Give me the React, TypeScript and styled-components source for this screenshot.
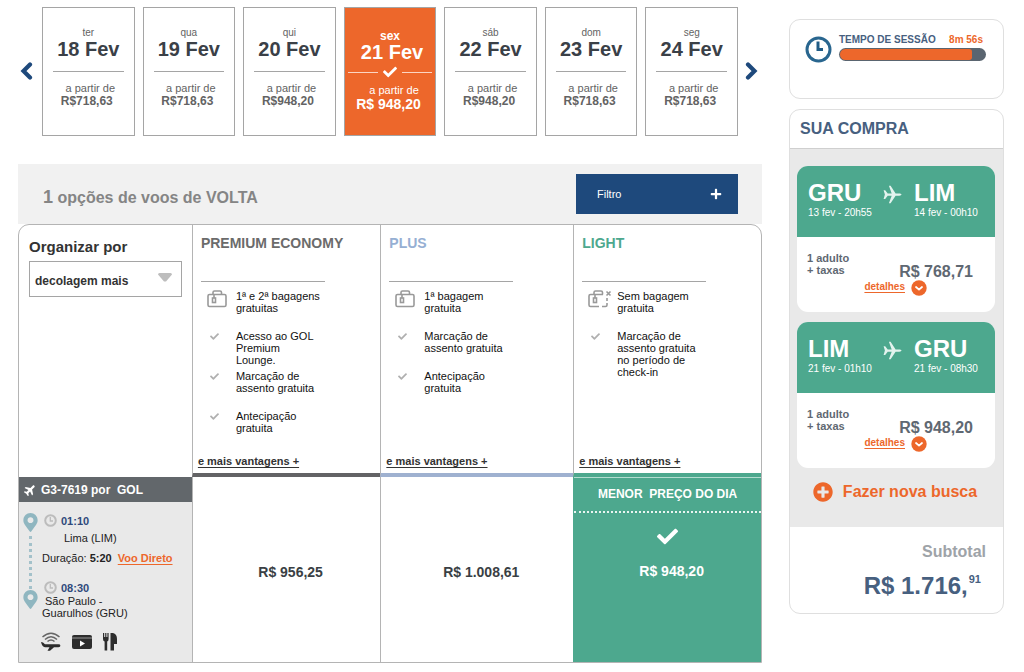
import React from "react";
import styled, { createGlobalStyle, css } from "styled-components";
import { FaCheck, FaMapMarkerAlt, FaPlus, FaPlusCircle } from "react-icons/fa";

const color = {
  orange: "#ed672b",
  green: "#4da88e",
  navy: "#1e497c",
  slate: "#47607f",
  line: "#b4b4b4",
  panel: "#e9e9e9",
};

const GlobalStyle = createGlobalStyle`
  *, *::before, *::after { box-sizing: border-box; }
  body {
    margin: 0;
    background: #fff;
    color: #222;
    font-family: "Liberation Sans", Arial, sans-serif;
    font-size: 11px;
    line-height: 12px;
  }
  button, select { font-family: inherit; }
  h1, h2, h3, p, ul, ol, dl { margin: 0; padding: 0; }
  ul, ol { list-style: none; }
  svg { display: block; flex: none; }
`;

const Page = styled.div`
  display: grid;
  grid-template-columns: minmax(0, 1fr) 215px;
  align-items: start;
  gap: 27px;
  padding: 7px 20px 8px 18px;
`;

/* ---------- date strip ---------- */

const DateStrip = styled.nav`
  display: flex;
  align-items: center;
`;

const ArrowButton = styled.button<{ $end?: boolean }>`
  display: flex;
  justify-content: ${(p) => (p.$end ? "flex-end" : "flex-start")};
  width: 24px;
  padding: 0 4px 2px 2px;
  border: 0;
  background: none;
  color: ${color.navy};
  cursor: pointer;
`;

const DateList = styled.ol`
  flex: 1;
  display: grid;
  grid-template-columns: repeat(7, minmax(0, 1fr));
  gap: 8px;
`;

const DateCard = styled.button<{ $active?: boolean }>`
  display: flex;
  flex-direction: column;
  align-items: stretch;
  width: 100%;
  height: 129px;
  padding: ${(p) => (p.$active ? "22px 3px 0" : "19px 10px 0")};
  border: 1px solid #a5a5a5;
  background: ${(p) => (p.$active ? color.orange : "#fff")};
  color: ${(p) => (p.$active ? "#fff" : "#636363")};
  text-align: center;
  white-space: nowrap;
  cursor: pointer;
`;

const Weekday = styled.span<{ $active?: boolean }>`
  font-size: ${(p) => (p.$active ? 12 : 10)}px;
  font-weight: ${(p) => (p.$active ? 700 : 400)};
  line-height: 12px;
`;

const DayLabel = styled.strong<{ $active?: boolean }>`
  padding-left: ${(p) => (p.$active ? 4 : 0)}px;
  color: ${(p) => (p.$active ? "#fff" : "#3a4047")};
  font-size: 20px;
  line-height: 20px;
`;

const CardRule = styled.span`
  height: 1px;
  margin: 12px 0 10px;
  background: #a5a5a5;
`;

const CheckRule = styled.span`
  display: flex;
  align-items: center;
  gap: 5px;
  height: 14px;
  margin: 3px 0 5px;
  &::before,
  &::after {
    content: "";
    flex: 1;
    height: 1px;
    background: #fbd5c4;
  }
`;

const FromLabel = styled.span<{ $active?: boolean }>`
  padding-left: ${(p) => (p.$active ? 8 : 4)}px;
  font-size: 11px;
  line-height: 12px;
`;

const FromPrice = styled.strong<{ $active?: boolean }>`
  padding-right: 3px;
  font-size: ${(p) => (p.$active ? 14 : 12)}px;
  line-height: ${(p) => (p.$active ? 16 : 14)}px;
`;

/* ---------- results ---------- */

const ResultsHeader = styled.header`
  display: flex;
  align-items: center;
  justify-content: space-between;
  height: 60px;
  margin-top: 28px;
  padding: 0 24px 0 25px;
  background: #f1f1f1;
`;

const ResultsTitle = styled.h1`
  padding-top: 6px;
  color: #858585;
  font-size: 16px;
  line-height: 20px;
`;

const ResultCount = styled.span`
  font-size: 18px;
`;

const FilterButton = styled.button`
  display: flex;
  align-items: center;
  justify-content: space-between;
  width: 162px;
  height: 40px;
  padding: 0 16px 0 21px;
  border: 0;
  background: ${color.navy};
  color: #fff;
  font-size: 11px;
  cursor: pointer;
`;

const TableFrame = styled.div`
  overflow: hidden;
  border: 1px solid ${color.line};
  border-radius: 11px 11px 0 0;
`;

const FareTable = styled.table`
  width: 100%;
  table-layout: fixed;
  border-collapse: separate;
  border-spacing: 0;
`;

const Col = styled.col<{ $share: number }>`
  width: ${(p) => p.$share}%;
`;

const SortCell = styled.td`
  padding: 14px 10px 0;
  vertical-align: top;
`;

const SortLabel = styled.label`
  display: block;
  margin-bottom: 6px;
  color: #333;
  font-size: 15px;
  font-weight: 700;
  line-height: 16px;
`;

const SelectWrap = styled.div`
  display: grid;
  align-items: center;
  > * {
    grid-area: 1 / 1;
  }
  svg {
    justify-self: end;
    margin: 0 10px 3px 0;
    pointer-events: none;
  }
`;

const SortSelect = styled.select`
  width: 100%;
  height: 36px;
  padding: 4px 28px 0 5px;
  border: 1px solid #a5a5a5;
  border-radius: 0;
  background: #fff;
  color: #333;
  font-size: 12px;
  font-weight: 700;
  appearance: none;
`;

const PlanCell = styled.th<{ $bar: string }>`
  padding: 10px 5px 5px;
  border-left: 1px solid ${color.line};
  border-bottom: 4px solid ${(p) => p.$bar};
  color: #111;
  font-weight: 400;
  text-align: left;
  vertical-align: top;
`;

const PlanName = styled.h2<{ $color: string }>`
  padding-left: 3px;
  color: ${(p) => p.$color};
  font-size: 14px;
  line-height: 16px;
`;

const PlanRule = styled.hr`
  width: 124px;
  height: 1px;
  margin: 30px 0 8px 3px;
  border: 0;
  background: #a5a5a5;
`;

const FeatureList = styled.ul`
  min-height: 164px;
`;

const Feature = styled.li`
  display: grid;
  grid-template-columns: 29px 86px;
  min-height: 40px;
  padding-left: 9px;
`;

const FeatureIcon = styled.span<{ $check?: boolean }>`
  padding: ${(p) => (p.$check ? "2px 0 0 3px" : "0")};
  color: #b0b0b0;
`;

const MoreLink = styled.a`
  color: #333;
  font-size: 11px;
  font-weight: 700;
  line-height: 14px;
  text-underline-offset: 2px;
`;

const FlightCell = styled.td`
  padding: 0;
  background: ${color.panel};
  vertical-align: top;
`;

const FlightBar = styled.h3`
  display: flex;
  align-items: center;
  gap: 5px;
  height: 25px;
  padding-left: 5px;
  background: #62676b;
  color: #fff;
  font-size: 12px;
  white-space: pre;
`;

const Itinerary = styled.div`
  display: grid;
  grid-template-columns: 13px 1fr;
  gap: 5px;
  padding: 11px 0 0 5px;
`;

const Route = styled.div`
  display: flex;
  flex-direction: column;
  align-items: center;
  height: 96px;
  color: #8fb6c0;
`;

const RouteDots = styled.span`
  flex: 1;
  margin: 4px 0 1px;
  border-left: 3px dotted #a3c1ca;
`;

const LegTime = styled.p`
  display: flex;
  align-items: center;
  gap: 4px;
  height: 14px;
  padding: 1px 0 0 2px;
  color: #2f4a7c;
  font-weight: 700;
`;

const LegPlace = styled.p<{ $indent: number; $block?: boolean }>`
  padding-top: ${(p) => (p.$block ? 1 : 5)}px;
  padding-left: ${(p) => p.$indent}px;
  text-indent: ${(p) => (p.$block ? 3 : 0)}px;
`;

const Duration = styled.p`
  padding: 8px 0 16px;
  white-space: nowrap;
`;

const DirectLink = styled.a`
  margin-left: 6px;
  color: ${color.orange};
  font-weight: 700;
  text-underline-offset: 2px;
`;

const Amenities = styled.ul`
  display: flex;
  align-items: center;
  gap: 11px;
  padding: 13px 0 9px 22px;
  color: #2d2d2d;
`;

const PriceCell = styled.td<{ $best?: boolean }>`
  height: 185px;
  padding: 0;
  border-left: 1px solid ${(p) => (p.$best ? color.green : color.line)};
  background: ${(p) => (p.$best ? color.green : "#fff")};
  box-shadow: ${(p) => (p.$best ? "inset 0 1px 0 #b5ddd0" : "none")};
`;

const PriceButton = styled.button<{ $best?: boolean }>`
  display: flex;
  flex-direction: column;
  align-items: center;
  justify-content: center;
  width: 100%;
  height: 185px;
  padding: 4px 0 0 8px;
  border: 0;
  background: none;
  color: #3a3f44;
  font-size: 14px;
  font-weight: 700;
  line-height: 16px;
  cursor: pointer;
  ${(p) =>
    p.$best &&
    css`
      justify-content: flex-start;
      padding: 0;
      color: #fff;
      svg {
        margin: 13px 0 16px;
      }
    `}
`;

const BestBanner = styled.span`
  width: 100%;
  height: 36px;
  padding-top: 9px;
  border-bottom: 2px dotted #e8f5f1;
  font-size: 12px;
  white-space: pre;
`;

const BestPrice = styled.span`
  padding-left: 8px;
`;

/* ---------- sidebar ---------- */

const Sidebar = styled.aside`
  display: flex;
  flex-direction: column;
  gap: 10px;
  padding-top: 12px;
`;

const Panel = styled.section`
  overflow: hidden;
  border: 1px solid #dfdfdf;
  border-radius: 11px;
  background: #fff;
`;

const SessionPanel = styled(Panel)`
  display: flex;
  gap: 7px;
  height: 80px;
  padding: 15px 17px 0 15px;
  > svg {
    margin-top: 1px;
  }
`;

const SessionInfo = styled.div`
  flex: 1;
`;

const SessionText = styled.div`
  display: flex;
  justify-content: space-between;
  margin-bottom: 3px;
  padding-right: 3px;
  color: ${color.slate};
  font-size: 10px;
  font-weight: 700;
  line-height: 10px;
  white-space: nowrap;
`;

const TimeLeft = styled.span`
  color: ${color.orange};
`;

const Track = styled.div`
  height: 13px;
  padding: 1px;
  border-radius: 7px;
  background: #5a6570;
`;

const TrackFill = styled.div`
  height: 11px;
  border-radius: 6px 3px 3px 6px;
  background: ${color.orange};
`;

const PurchaseTitle = styled.h2`
  height: 39px;
  padding: 9px 10px 0;
  border-bottom: 1px solid #cfcfcf;
  color: ${color.slate};
  font-size: 16px;
  line-height: 20px;
`;

const TripArea = styled.div`
  display: flex;
  flex-direction: column;
  gap: 10px;
  padding: 17px 8px 25px 7px;
  background: ${color.panel};
`;

const TripCard = styled.article`
  overflow: hidden;
  border-radius: 11px;
  background: #fff;
`;

const TripRoute = styled.div`
  display: grid;
  grid-template-columns: 75px 31px 1fr;
  height: 71px;
  padding: 14px 0 0 11px;
  background: ${color.green};
  color: #fff;
  svg {
    margin-top: 5px;
  }
`;

const Airport = styled.strong`
  display: block;
  font-size: 24px;
  line-height: 26px;
`;

const TripDate = styled.span`
  font-size: 10px;
  line-height: 12px;
  white-space: nowrap;
`;

const TripFare = styled.div`
  display: grid;
  grid-template-columns: 1fr auto;
  align-content: start;
  height: 75px;
  padding: 15px 22px 0 10px;
  color: #5f6872;
  font-weight: 700;
`;

const TripPrice = styled.strong`
  padding-top: 11px;
  font-size: 16px;
  line-height: 17px;
`;

const DetailsLink = styled.a`
  grid-column: 1 / -1;
  display: flex;
  gap: 6px;
  justify-self: end;
  height: 16px;
  margin-right: 46px;
  color: ${color.orange};
  font-size: 10px;
  line-height: 14px;
  text-underline-offset: 2px;
`;

const NewSearch = styled.button`
  display: flex;
  align-items: center;
  align-self: center;
  gap: 10px;
  margin: 4px 2px 0 0;
  padding: 0;
  border: 0;
  background: none;
  color: ${color.orange};
  font-size: 16px;
  font-weight: 700;
  line-height: 20px;
  white-space: nowrap;
  cursor: pointer;
`;

const Totals = styled.div`
  padding: 15px 17px 13px;
  text-align: right;
`;

const SubtotalLabel = styled.p`
  color: #9ea3a8;
  font-size: 16px;
  font-weight: 700;
  line-height: 20px;
`;

const TotalValue = styled.p`
  display: flex;
  justify-content: flex-end;
  padding: 10px 5px 0 0;
  color: ${color.slate};
  font-size: 24px;
  font-weight: 700;
  line-height: 28px;
`;

const Cents = styled.span`
  padding-left: 1px;
  font-size: 11px;
  line-height: 14px;
`;

/* ---------- drawings ---------- */

const Chevron = ({ right }: { right?: boolean }) => (
  <svg width="13" height="18" viewBox="0 0 13 18" fill="none" stroke="currentColor" strokeWidth="4.200">
    <path
      strokeLinejoin="miter"
      strokeLinecap="round"
      d={right ? "M3 2.500L9.500 9L3 15.500" : "M10 2.500L3.500 9L10 15.500"}
    />
  </svg>
);

const GrayClock = () => (
  <svg width="13" height="13" viewBox="0 0 13 13" fill="none" stroke="#bcbcbc">
    <circle cx="6.500" cy="6.500" r="5.300" strokeWidth="2" />
    <path d="M6.300 3V7H9" strokeWidth="1.300" />
  </svg>
);

const DownBadge = () => (
  <svg width="16" height="16" viewBox="0 0 16 16" fill="none">
    <circle cx="8" cy="8" r="7.700" fill={color.orange} />
    <path d="M5 7l3 2.600L11 7" stroke="#fff" strokeWidth="1.800" strokeLinecap="round" strokeLinejoin="round" />
  </svg>
);

const BagIcon = ({ none }: { none?: boolean }) => (
  <svg width="24" height="18" viewBox="0 0 24 18" fill="none" stroke="#999" strokeWidth="1.600">
    {none ? (
      <>
        <path d="M15 4.500H2.500Q1 4.500 1 6V15Q1 16.500 2.500 16.500H11M14 16.500H17.500Q19 16.500 19 15V13M19 11V8" />
        <path d="M18.500 1.500l4 4M22.500 1.500l-4 4" />
      </>
    ) : (
      <rect x="1" y="4.500" width="18" height="12" rx="1.500" />
    )}
    <path d="M6 4.500V2.500Q6 1 7.500 1H13Q14.500 1 14.500 2.500V4.500" />
    <path d="M7 4.500V8" />
    <rect x="5.500" y="8" width="3" height="4.500" />
  </svg>
);

const PlaneDiagonal = () => (
  <svg width="12" height="12" viewBox="0 0 24 24" fill="#fff">
    <path
      transform="rotate(45 12 12) translate(-2 -2) scale(1.17)"
      d="M21 16v-2.500l-7-4.500V3.500c0-1.200-.8-2-2-2s-2 .8-2 2V9l-7 4.500V16l7-2.200V18l-3 2v2l5-1 5 1v-2l-3-2v-4.200z"
    />
  </svg>
);

const PlaneRight = () => (
  <svg width="19" height="19" viewBox="0 0 19 19" fill="#e3f3ee">
    <path d="M.6 5.200h1.600l2.500 3.200h4L5.900.7h1.700l5 7.700h3.700c1.300 0 2.200.6 2.200 1.200s-.9 1.200-2.200 1.200h-3.700l-5 7.500H5.900l2.800-7.500h-4L2.200 14H.6l1.300-4.400z" />
  </svg>
);

const SessionClock = () => (
  <svg width="27" height="27" viewBox="0 0 27 27" fill="none">
    <circle cx="13.500" cy="13.500" r="11.500" stroke="#29668f" strokeWidth="3" />
    <path d="M13 5.500V13.500H18" stroke="#215c86" strokeWidth="3" />
  </svg>
);

const WifiPlane = () => (
  <svg width="20" height="19" viewBox="0 0 20 19" fill="none" stroke="currentColor" strokeWidth="1.500">
    <path d="M1.500 5Q10-2.500 18.500 5M4 7.500Q10 2 16 7.500M6.500 9.500Q10 6.500 13.500 9.500" stroke="#666" />
    <path
      d="M0 10l2 .5 2 1.800H17.500q1.900 0 1.900 1.400T17.500 15.200H13L9 18.700H6.500L8.500 15.200H4Q1 14.800 0 10z"
      fill="currentColor"
      stroke="none"
    />
  </svg>
);

const VideoPlayer = () => (
  <svg width="20" height="16" viewBox="0 0 20 16">
    <rect x="0" y="1" width="20" height="14" rx="2" fill="currentColor" />
    <path d="M0 4h20" stroke="#999" strokeWidth="1" />
    <path d="M8 6.500l5 3-5 3z" fill="#fff" />
  </svg>
);

const Meal = () => (
  <svg width="14" height="18" viewBox="0 0 14 18" fill="currentColor">
    <path d="M0 0h1.200v4h1V0h1.200v4h1V0h1.200v6q0 2-1.400 2.500V17.500H1.600V8.500Q0 8 0 6z" />
    <path d="M7.500 0H10q4 1 4 6v5h-3v6.500H7.500z" />
  </svg>
);

/* ---------- data ---------- */

const dates = [
  { weekday: "ter", day: "18 Fev", price: "R$718,63" },
  { weekday: "qua", day: "19 Fev", price: "R$718,63" },
  { weekday: "qui", day: "20 Fev", price: "R$948,20" },
  { weekday: "sex", day: "21 Fev", price: "R$ 948,20", active: true },
  { weekday: "sáb", day: "22 Fev", price: "R$948,20" },
  { weekday: "dom", day: "23 Fev", price: "R$718,63" },
  { weekday: "seg", day: "24 Fev", price: "R$718,63" },
];

const plans = [
  {
    name: "PREMIUM ECONOMY",
    ink: "#6b6b6b",
    bar: "#636365",
    bag: "1ª e 2ª bagagens gratuitas",
    noBag: false,
    perks: ["Acesso ao GOL Premium Lounge.", "Marcação de assento gratuita", "Antecipação gratuita"],
  },
  {
    name: "PLUS",
    ink: "#96afd3",
    bar: "#9fb1d0",
    bag: "1ª bagagem gratuita",
    noBag: false,
    perks: ["Marcação de assento gratuita", "Antecipação gratuita"],
  },
  {
    name: "LIGHT",
    ink: color.green,
    bar: color.green,
    bag: "Sem bagagem gratuita",
    noBag: true,
    perks: ["Marcação de assento gratuita no período de check-in"],
  },
];

const trips = [
  { from: "GRU", fromDate: "13 fev - 20h55", to: "LIM", toDate: "14 fev - 00h10", price: "R$ 768,71" },
  { from: "LIM", fromDate: "21 fev - 01h10", to: "GRU", toDate: "21 fev - 08h30", price: "R$ 948,20" },
];

const sessionShare = 91;

export default function App() {
  return (
    <>
      <GlobalStyle />
      <Page>
        <main>
          <DateStrip aria-label="Datas">
            <ArrowButton type="button" aria-label="Datas anteriores">
              <Chevron />
            </ArrowButton>
            <DateList>
              {dates.map((d) => (
                <li key={d.day}>
                  <DateCard type="button" $active={d.active} aria-pressed={!!d.active}>
                    <Weekday $active={d.active}>{d.weekday}</Weekday>
                    <DayLabel $active={d.active}>{d.day}</DayLabel>
                    {d.active ? (
                      <CheckRule>
                        <FaCheck size={14} />
                      </CheckRule>
                    ) : (
                      <CardRule />
                    )}
                    <FromLabel $active={d.active}>a partir de</FromLabel>
                    <FromPrice $active={d.active}>{d.price}</FromPrice>
                  </DateCard>
                </li>
              ))}
            </DateList>
            <ArrowButton type="button" $end aria-label="Próximas datas">
              <Chevron right />
            </ArrowButton>
          </DateStrip>

          <ResultsHeader>
            <ResultsTitle>
              <ResultCount>1</ResultCount> opções de voos de VOLTA
            </ResultsTitle>
            <FilterButton type="button">
              Filtro
              <FaPlus size={12} />
            </FilterButton>
          </ResultsHeader>

          <TableFrame>
            <FareTable>
              <colgroup>
                <Col $share={23.3} />
                <Col $share={25.4} />
                <Col $share={26} />
                <Col $share={25.3} />
              </colgroup>
              <thead>
                <tr>
                  <SortCell>
                    <SortLabel htmlFor="sort">Organizar por</SortLabel>
                    <SelectWrap>
                      <SortSelect id="sort" defaultValue="decolagem">
                        <option value="decolagem">decolagem mais</option>
                      </SortSelect>
                      <svg width="14" height="9" viewBox="0 0 14 9" fill="#bdbdbd">
                        <path d="M1.500 0h11Q14 0 14 1.500L8 8.500H6L0 1.500Q0 0 1.500 0z" />
                      </svg>
                    </SelectWrap>
                  </SortCell>
                  {plans.map((plan) => (
                    <PlanCell key={plan.name} scope="col" $bar={plan.bar}>
                      <PlanName $color={plan.ink}>{plan.name}</PlanName>
                      <PlanRule />
                      <FeatureList>
                        <Feature>
                          <FeatureIcon>
                            <BagIcon none={plan.noBag} />
                          </FeatureIcon>
                          {plan.bag}
                        </Feature>
                        {plan.perks.map((perk) => (
                          <Feature key={perk}>
                            <FeatureIcon $check>
                              <FaCheck size={9} />
                            </FeatureIcon>
                            {perk}
                          </Feature>
                        ))}
                      </FeatureList>
                      <MoreLink href="#vantagens">e mais vantagens +</MoreLink>
                    </PlanCell>
                  ))}
                </tr>
              </thead>
              <tbody>
                <tr>
                  <FlightCell>
                    <FlightBar>
                      <PlaneDiagonal />
                      {"G3-7619 por  GOL"}
                    </FlightBar>
                    <Itinerary>
                      <Route>
                        <FaMapMarkerAlt size={19} />
                        <RouteDots />
                        <FaMapMarkerAlt size={19} />
                      </Route>
                      <div>
                        <LegTime>
                          <GrayClock />
                          01:10
                        </LegTime>
                        <LegPlace $indent={22}>Lima (LIM)</LegPlace>
                        <Duration>
                          Duração: <strong>5:20</strong>
                          <DirectLink href="#voo">Voo Direto</DirectLink>
                        </Duration>
                        <LegTime>
                          <GrayClock />
                          08:30
                        </LegTime>
                        <LegPlace $indent={0} $block>
                          São Paulo -<br />
                          Guarulhos (GRU)
                        </LegPlace>
                      </div>
                    </Itinerary>
                    <Amenities>
                      <li>
                        <WifiPlane />
                      </li>
                      <li>
                        <VideoPlayer />
                      </li>
                      <li>
                        <Meal />
                      </li>
                    </Amenities>
                  </FlightCell>
                  <PriceCell>
                    <PriceButton type="button">R$ 956,25</PriceButton>
                  </PriceCell>
                  <PriceCell>
                    <PriceButton type="button">R$ 1.008,61</PriceButton>
                  </PriceCell>
                  <PriceCell $best>
                    <PriceButton type="button" $best>
                      <BestBanner>{"MENOR  PREÇO DO DIA"}</BestBanner>
                      <FaCheck size={21} />
                      <BestPrice>R$ 948,20</BestPrice>
                    </PriceButton>
                  </PriceCell>
                </tr>
              </tbody>
            </FareTable>
          </TableFrame>
        </main>

        <Sidebar>
          <SessionPanel>
            <SessionClock />
            <SessionInfo>
              <SessionText>
                <span>TEMPO DE SESSÃO</span>
                <TimeLeft>8m 56s</TimeLeft>
              </SessionText>
              <Track>
                <TrackFill style={{ width: `${sessionShare}%` }} />
              </Track>
            </SessionInfo>
          </SessionPanel>

          <Panel>
            <PurchaseTitle>SUA COMPRA</PurchaseTitle>
            <TripArea>
              {trips.map((trip) => (
                <TripCard key={trip.from}>
                  <TripRoute>
                    <div>
                      <Airport>{trip.from}</Airport>
                      <TripDate>{trip.fromDate}</TripDate>
                    </div>
                    <PlaneRight />
                    <div>
                      <Airport>{trip.to}</Airport>
                      <TripDate>{trip.toDate}</TripDate>
                    </div>
                  </TripRoute>
                  <TripFare>
                    <p>
                      1 adulto
                      <br />+ taxas
                    </p>
                    <TripPrice>{trip.price}</TripPrice>
                    <DetailsLink href="#detalhes">
                      detalhes
                      <DownBadge />
                    </DetailsLink>
                  </TripFare>
                </TripCard>
              ))}
              <NewSearch type="button">
                <FaPlusCircle size={20} />
                Fazer nova busca
              </NewSearch>
            </TripArea>
            <Totals>
              <SubtotalLabel>Subtotal</SubtotalLabel>
              <TotalValue>
                R$ 1.716,<Cents>91</Cents>
              </TotalValue>
            </Totals>
          </Panel>
        </Sidebar>
      </Page>
    </>
  );
}
